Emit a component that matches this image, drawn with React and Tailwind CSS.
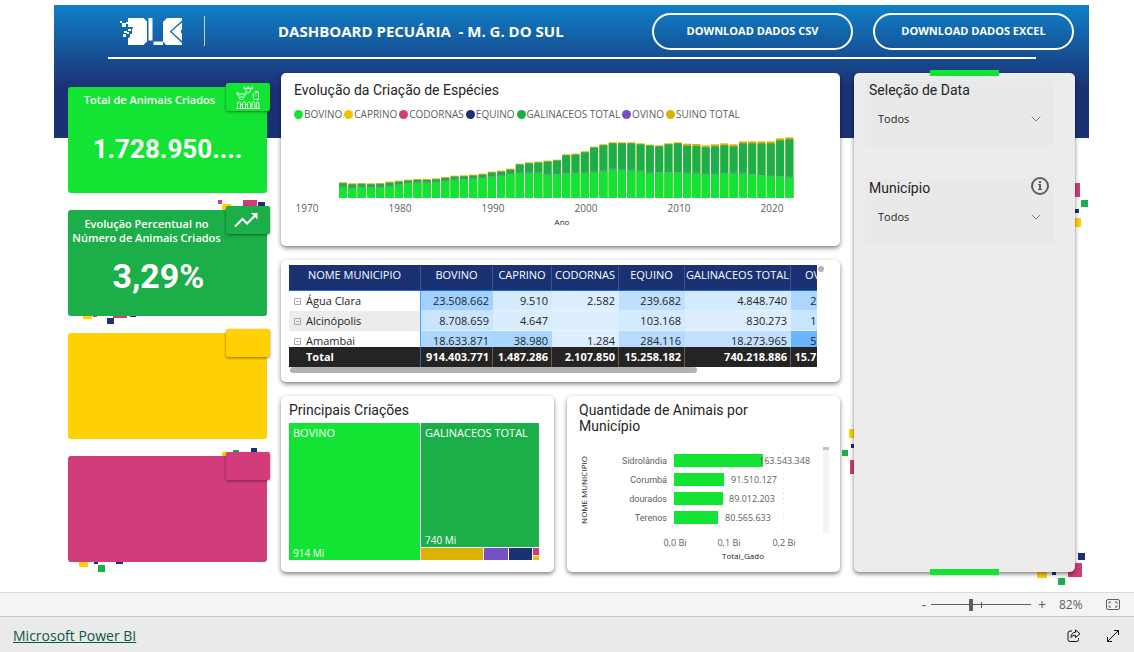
import React, { useState } from "react";
import { ChevronDown } from "lucide-react";

const NAVY = "#1a3174";
const EMERALD = "#1cae48";
const YELLOW = "#ffd003";
const PINK = "#d23c7a";

const species = [
  { name: "BOVINO", color: "bg-[#13e434]" },
  { name: "CAPRINO", color: "bg-[#f2c200]" },
  { name: "CODORNAS", color: "bg-[#d23c7a]" },
  { name: "EQUINO", color: "bg-[#1a3174]" },
  { name: "GALINACEOS TOTAL", color: "bg-[#1cae48]" },
  { name: "OVINO", color: "bg-[#7650c3]" },
  { name: "SUINO TOTAL", color: "bg-[#dcb200]" },
];

// Yearly heights from 1974 to 2022: total herd and cattle share.
const totals = [
  47, 44, 45, 44, 45, 49, 52, 55, 57, 57, 59, 63, 67, 68, 70, 73, 79, 82, 88, 103, 107, 109, 112,
  115, 131, 133, 140, 154, 161, 167, 167, 167, 164, 160, 158, 164, 167, 163, 162, 158, 161, 164,
  161, 170, 170, 170, 170, 179, 182,
];
const cattle = [
  31, 28, 30, 30, 30, 33, 38, 43, 44, 44, 46, 49, 53, 54, 56, 59, 62, 65, 70, 73, 74, 74, 70, 69,
  72, 73, 74, 76, 79, 85, 83, 82, 79, 73, 75, 75, 75, 73, 73, 70, 70, 73, 73, 73, 70, 66, 64, 63,
  61,
];

const columns = [
  "NOME MUNICIPIO",
  "BOVINO",
  "CAPRINO",
  "CODORNAS",
  "EQUINO",
  "GALINACEOS TOTAL",
  "OVINO",
];

const rows = [
  {
    name: "Água Clara",
    head: "bg-white",
    cells: [
      ["23.508.662", "bg-[#a1d1ff]"],
      ["9.510", "bg-[#d4eaff]"],
      ["2.582", "bg-[#dceeff]"],
      ["239.682", "bg-[#bfdfff]"],
      ["4.848.740", "bg-[#d4eaff]"],
      ["273.104", "bg-[#abd6ff]"],
    ],
  },
  {
    name: "Alcinópolis",
    head: "bg-[#ececec]",
    cells: [
      ["8.708.659", "bg-[#c9e4ff]"],
      ["4.647", "bg-[#daedff]"],
      ["", "bg-[#dceeff]"],
      ["103.168", "bg-[#d4eaff]"],
      ["830.273", "bg-[#dceeff]"],
      ["139.870", "bg-[#c9e4ff]"],
    ],
  },
  {
    name: "Amambai",
    head: "bg-white",
    cells: [
      ["18.633.871", "bg-[#aed7ff]"],
      ["38.980", "bg-[#a9d5ff]"],
      ["1.284", "bg-[#dceeff]"],
      ["284.116", "bg-[#b7dbff]"],
      ["18.273.965", "bg-[#c2e0ff]"],
      ["563.218", "bg-[#6bb5ff]"],
    ],
  },
];

const grandTotals = [
  "914.403.771",
  "1.487.286",
  "2.107.850",
  "15.258.182",
  "740.218.886",
  "15.784.302",
];

const cities = [
  { name: "Sidrolândia", value: "163.543.348", width: 89, label: 192 },
  { name: "Corumbá", value: "91.510.127", width: 50, label: 164 },
  { name: "dourados", value: "89.012.203", width: 49, label: 162 },
  { name: "Terenos", value: "80.565.633", width: 44, label: 158 },
];

function Confetti({ pieces }) {
  return (
    <svg className="absolute left-0 top-0 -z-10 size-px overflow-visible" aria-hidden="true">
      {pieces.map(([x, y, w, h, fill], i) => (
        <rect key={i} x={x} y={y} width={w} height={h} fill={fill} />
      ))}
    </svg>
  );
}

function Logo() {
  return (
    <svg viewBox="0 0 64 30" className="h-[30px] w-16 shrink-0" role="img" aria-label="DLB">
      <g fill="#fff">
        <path d="M8 2h15.500l3.500 3.500v20L23.500 29H8v-7l2-1v-3h2v-5l1-1v-1h-5z" />
        <path d="M28.500 2h4v22.500h-4z" />
        <path d="M33.500 25.500h9.500V29h-9.500z" />
        <path d="M47 2h15v2.500L49.700 15.500 62 27v2H46l-3-3.500V6z" />
        <path d="M62 6.500v6.500l-1.500 2.500L62 18v7L51.500 15.500z" />
        <path d="M0 5h2v2H0zM2 7h4v4H2zM6 6h2v2H6zM4 15h3v2H4zM8 13h3v2H8zM3 18h3v3H3zM7 16h2v2H7z" />
      </g>
    </svg>
  );
}

function AnimalsIcon() {
  return (
    <svg viewBox="0 0 24 24" className="size-6" fill="none" stroke="#fff" strokeWidth="0.8" aria-hidden="true">
      <path d="M10 3.500h4.500l-.5 3-1.200 1.500h-1.200L10.500 6.500zM10 3.500L8 4 8.500 1.200M14.500 3.500l2 .5L16 1.200M10.500 3.500c0-2 3.500-2 3.500 0" />
      <path d="M2.500 9h6L8 12.500l-1.200 2H4.200l-1.200-2zM2.500 9L1 10V7l1.500 1M8.500 9L10 10V7L8.500 8M4 12h3M4.500 10.500v.3M6.500 10.500v.3" />
      <path d="M17 13.500l1-3-1.500-.5 2.500-2.500h3.500v7H17.500M19.500 7.500V6.200h2v1.300M19.500 10h1" />
      <path d="M1.500 23.500V18L3 16.500 4.500 18v5.500M6.500 23.500V18L8 16.500 9.500 18v5.500M11.500 23.500V18l1.500-1.500 1.500 1.500v5.500M16 23.500V18l1.500-1.500L19 18v5.500M20.500 23.500V18l1.200-1.500L23 18v5.500M0 23.500h24M4.500 19.500h2M9.500 19.500h2M14.500 19.500H16" />
    </svg>
  );
}

function TrendIcon() {
  return (
    <svg viewBox="0 0 28 20" className="-ml-1 h-5 w-7" fill="none" stroke="#fff" strokeWidth="2" aria-hidden="true">
      <path d="M3 16.500l7.500-7.500 4.500 4.500 9-9" />
      <path d="M19 3h6.500v6.500z" fill="#fff" stroke="none" />
    </svg>
  );
}

function KpiCard({ color, title, value, titleClass = "", valueClass = "", icon, confetti = [] }) {
  return (
    <section className="relative isolate h-[106px]">
      <Confetti pieces={confetti} />
      <div className={`h-full rounded-[3px] ${color}`}>
        {title && (
          <h2 className={`text-center text-[11px] font-semibold leading-[14px] text-white ${titleClass}`}>
            {title}
          </h2>
        )}
        {value && (
          <p className={`text-center font-['Roboto',sans-serif] font-bold text-white ${valueClass}`}>
            {value}
          </p>
        )}
      </div>
      <div
        className={`absolute -right-[3px] -top-1 flex h-7 w-11 items-center justify-center rounded-[2px] shadow-[0_1px_3px_rgba(0,0,0,0.45)] ${color}`}
      >
        {icon}
      </div>
    </section>
  );
}

function Card({ className = "", children }) {
  return (
    <section
      className={`min-w-0 overflow-hidden rounded-[5px] bg-white shadow-[0_2px_4px_rgba(0,0,0,0.5)] ${className}`}
    >
      {children}
    </section>
  );
}

function Heading({ children, className = "" }) {
  return (
    <h2 className={`font-['Roboto',sans-serif] text-sm leading-4 text-[#252423] ${className}`}>
      {children}
    </h2>
  );
}

function EvolutionChart() {
  const base = 75;
  return (
    <svg viewBox="0 0 559 110" className="w-full" role="img" aria-label="Evolução por ano">
      {totals.map((t, i) => {
        const x = 58 + i * 9.3;
        const total = t / 3;
        const beef = cattle[i] / 3;
        const pig = i < 37 ? 1 : 2;
        return (
          <g key={i}>
            <rect x={x} y={base - total} width="8" height={total} fill="#dcb200" />
            <rect x={x} y={base - total + pig} width="8" height={total - pig} fill="#1cae48" />
            <rect x={x} y={base - beef - 1} width="8" height="1" fill="#5fb08a" />
            <rect x={x} y={base - beef} width="8" height={beef} fill="#13e434" />
          </g>
        );
      })}
      <g fill="#605e5c" fontSize="10" textAnchor="middle">
        {[1970, 1980, 1990, 2000, 2010, 2020].map((year, i) => (
          <text key={year} x={26 + i * 93} y="89">
            {year}
          </text>
        ))}
      </g>
      <text x="281" y="102" fill="#252423" fontSize="8" textAnchor="middle">
        Ano
      </text>
    </svg>
  );
}

function HerdTable() {
  return (
    <div className="pl-2 pr-4 pt-[5px]">
      <div className="flex">
        <div className="h-[102px] min-w-0 flex-1 overflow-hidden">
          <table className="w-[566px] table-fixed border-separate border-spacing-0 text-[11px] leading-4 text-[#252423]">
            <colgroup>
              <col className="w-[132px]" />
              <col className="w-[72px]" />
              <col className="w-[59px]" />
              <col className="w-[67px]" />
              <col className="w-[66px]" />
              <col className="w-[106px]" />
              <col className="w-[64px]" />
            </colgroup>
            <thead>
              <tr className="bg-[#1a3174] text-white">
                {columns.map((c) => (
                  <th
                    key={c}
                    scope="col"
                    className="h-[26px] whitespace-nowrap border-b border-r border-b-[#1c6dd0] border-r-[#41558c] p-0 pb-[6px] text-center font-normal"
                  >
                    {c}
                  </th>
                ))}
              </tr>
            </thead>
            <tbody>
              {rows.map((r) => (
                <tr key={r.name}>
                  <th
                    scope="row"
                    className={`h-5 border-r border-r-[#4ba3f5] p-0 pl-[5px] text-left font-normal ${r.head}`}
                  >
                    <span className="flex items-center gap-[5px]">
                      <svg viewBox="0 0 7 7" className="size-[7px]" aria-hidden="true">
                        <path d="M.5.5h6v6h-6zM2 3.500h3" fill="none" stroke="#a9a9a9" />
                      </svg>
                      {r.name}
                    </span>
                  </th>
                  {r.cells.map(([value, shade], i) => (
                    <td
                      key={i}
                      className={`h-5 border-b border-white/40 p-0 pr-1 text-right ${shade}`}
                    >
                      {value}
                    </td>
                  ))}
                </tr>
              ))}
            </tbody>
            <tfoot className="sticky bottom-0">
              <tr className="bg-[#252423] font-bold text-white">
                <th scope="row" className="h-5 border-r border-[#1c6dd0] p-0 pl-[17px] text-left">
                  Total
                </th>
                {grandTotals.map((t) => (
                  <td key={t} className="h-5 border-r border-[#605e5c] p-0 pr-[3px] text-right">
                    {t}
                  </td>
                ))}
              </tr>
            </tfoot>
          </table>
        </div>
        <div className="ml-px mt-px size-[6px] rounded-full bg-[#b3b3b3]" />
      </div>
      <div className="ml-px h-[6px] w-[76%] rounded-full bg-[#b3b3b3]" />
    </div>
  );
}

function Treemap() {
  return (
    <div className="mx-2 mt-[5px] flex h-[137px] gap-px pr-[7px] text-[10px] leading-3 text-white">
      <div className="flex w-[131px] flex-col justify-between bg-[#13e434] px-1 pb-px pt-[3px]">
        <span className="text-[11px] leading-[14px]">BOVINO</span>
        <span>914 Mi</span>
      </div>
      <div className="flex min-w-0 flex-1 flex-col gap-px">
        <div className="flex flex-1 flex-col justify-between bg-[#1cae48] pb-px pl-1 pt-[3px]">
          <span className="whitespace-nowrap text-[11px] leading-[14px]">GALINACEOS TOTAL</span>
          <span>740 Mi</span>
        </div>
        <div className="flex h-3 gap-px">
          <div className="w-[62px] bg-[#dcb200]" />
          <div className="w-6 bg-[#7650c3]" />
          <div className="w-[23px] bg-[#1a3174]" />
          <div className="flex flex-1 flex-col gap-px">
            <div className="flex-1 bg-[#d23c7a]" />
            <div className="h-1 bg-[#f2c200]" />
          </div>
        </div>
      </div>
    </div>
  );
}

function CityChart() {
  return (
    <svg viewBox="0 0 273 126" className="w-full" role="img" aria-label="Animais por município">
      <g stroke="#dedede" strokeDasharray="1 4">
        <path d="M107.500 4v85M162.500 4v85M216.500 4v85" />
      </g>
      {cities.map((c, i) => (
        <g key={c.name} fill="#605e5c" fontSize="9">
          <rect x="107" y={10 + i * 19} width={c.width} height="13" fill="#13e434" />
          <text x="100" y={20 + i * 19} textAnchor="end" className="font-['Roboto',sans-serif]">
            {c.name}
          </text>
          <text x={c.label} y={20 + i * 19}>
            {c.value}
          </text>
        </g>
      ))}
      <g fill="#605e5c" fontSize="9" textAnchor="middle">
        <text x="108" y="102">0,0 Bi</text>
        <text x="162" y="102">0,1 Bi</text>
        <text x="217" y="102">0,2 Bi</text>
      </g>
      <g fill="#252423" fontSize="8" textAnchor="middle">
        <text x="176" y="115">Total_Gado</text>
        <text transform="translate(20 46) rotate(-90)">NOME MUNICIPIO</text>
      </g>
      <rect x="256" y="4" width="6" height="85" fill="#f3f3f3" />
      <rect x="256" y="3" width="6" height="3" fill="#c4c4c4" />
    </svg>
  );
}

function Slicer({ id, label, info }) {
  return (
    <div className="h-[65px] bg-[#e9e9e9] pl-1 pr-[10px]">
      <div className="flex h-[18px] items-center justify-between">
        <label htmlFor={id} className="font-['Roboto',sans-serif] text-sm leading-4 text-[#252423]">
          {label}
        </label>
        {info && (
          <svg viewBox="0 0 20 20" className="-mr-[6px] -mt-1 size-5" aria-hidden="true">
            <circle cx="10" cy="10" r="8" fill="none" stroke="#605e5c" strokeWidth="2" />
            <path d="M9 5h2v2H9zM8 8h3v5h1v1H8v-1h1V9H8z" fill="#605e5c" />
          </svg>
        )}
      </div>
      <div className="mt-[10px] flex items-center">
        <select
          id={id}
          className="w-full appearance-none bg-transparent pl-[9px] text-[11px] leading-5 text-[#252423] outline-none"
        >
          <option>Todos</option>
        </select>
        <ChevronDown className="pointer-events-none -ml-4 size-4 shrink-0 text-[#605e5c]" strokeWidth={1.2} aria-hidden="true" />
      </div>
    </div>
  );
}

export default function App() {
  const [zoom, setZoom] = useState(40);
  return (
    <div className="flex min-h-screen flex-col bg-white font-['Open_Sans','Noto_Sans',sans-serif]">
      <main className="flex-1 pb-5 pl-[54px] pr-[45px] pt-[5px]">
        <div className="bg-[linear-gradient(#0f80c8_0px,#174a8d_56px,#1a3174_84px)] bg-[length:100%_133px] bg-no-repeat">
          <header className="h-[68px] pl-[54px] pr-[15px]">
            <div className="flex h-[52px] items-center">
              <div className="flex w-[97px] items-center justify-between pl-3">
                <Logo />
                <span className="h-[30px] w-px bg-white/70" />
              </div>
              <h1 className="ml-[73px] flex-1 whitespace-pre text-[15px] font-bold leading-5 text-white">
                DASHBOARD PECUÁRIA  - M. G. DO SUL
              </h1>
              <div className="flex gap-5">
                <button className="h-[37px] w-[201px] rounded-full border-2 border-white text-[11px] font-bold text-white">
                  DOWNLOAD DADOS CSV
                </button>
                <button className="h-[37px] w-[201px] rounded-full border-2 border-white text-[11px] font-bold text-white">
                  DOWNLOAD DADOS EXCEL
                </button>
              </div>
            </div>
            <div className="mr-[38px] h-[2px] bg-white" />
          </header>

          <div className="grid grid-cols-[199px_minmax(0,1fr)_221px] gap-[14px] px-[14px]">
            <div className="flex flex-col gap-[17px] pt-[14px]">
              <KpiCard
                color="bg-[#13e434]"
                title="Total de Animais Criados"
                titleClass="pr-9 pt-[6px]"
                value="1.728.950...."
                valueClass="pt-[22px] text-[26px] leading-10"
                icon={<AnimalsIcon />}
              />
              <KpiCard
                color="bg-[#1cae48]"
                title={
                  <>
                    Evolução Percentual no
                    <br />
                    Número de Animais Criados
                  </>
                }
                titleClass="pr-[42px] pt-[7px]"
                value="3,29%"
                valueClass="pr-[18px] pt-[11px] text-[34px] leading-10"
                icon={<TrendIcon />}
                confetti={[
                  [150, -10, 4, 4, PINK],
                  [154, -6, 9, 8, YELLOW],
                  [175, -10, 14, 8, PINK],
                  [190, -8, 7, 6, NAVY],
                  [15, 104, 9, 5, YELLOW],
                  [25, 104, 4, 3, PINK],
                  [45, 104, 14, 4, PINK],
                  [62, 104, 6, 3, NAVY],
                  [39, 108, 7, 6, NAVY],
                ]}
              />
              <KpiCard color="bg-[#ffd003]" />
              <KpiCard
                color="bg-[#d23c7a]"
                confetti={[
                  [154, -4, 9, 8, YELLOW],
                  [165, -6, 6, 6, EMERALD],
                  [183, -8, 6, 6, NAVY],
                  [11, 104, 9, 7, YELLOW],
                  [26, 104, 4, 4, NAVY],
                  [30, 109, 7, 7, EMERALD],
                  [48, 104, 7, 4, NAVY],
                ]}
              />
            </div>

            <div className="flex min-w-0 flex-col gap-[14px]">
              <Card className="h-[173px]">
                <Heading className="pl-[13px] pt-[9px]">Evolução da Criação de Espécies</Heading>
                <ul className="flex gap-[2px] pl-[13px] pt-[9px] text-[10px] leading-[14px] text-[#605e5c]">
                  {species.map((s) => (
                    <li key={s.name} className="flex items-center gap-px whitespace-nowrap">
                      <span className={`size-[9px] rounded-full ${s.color}`} />
                      {s.name}
                    </li>
                  ))}
                </ul>
                <div className="pt-[2px]">
                  <EvolutionChart />
                </div>
              </Card>
              <Card className="h-[122px]">
                <HerdTable />
              </Card>
              <div className="grid grid-cols-2 gap-[13px]">
                <Card className="h-[176px]">
                  <Heading className="pl-2 pt-[6px]">Principais Criações</Heading>
                  <Treemap />
                </Card>
                <Card className="h-[176px]">
                  <Heading className="w-[200px] pl-3 pt-[6px]">
                    Quantidade de Animais por Município
                  </Heading>
                  <div className="pt-[10px]">
                    <CityChart />
                  </div>
                </Card>
              </div>
            </div>

            <aside className="relative isolate">
              <Confetti
                pieces={[
                  [219, 110, 7, 14, PINK],
                  [227, 127, 7, 7, EMERALD],
                  [219, 136, 6, 4, NAVY],
                  [219, 145, 8, 9, YELLOW],
                  [-5, 356, 9, 9, YELLOW],
                  [-3, 371, 4, 4, NAVY],
                  [-12, 377, 6, 6, EMERALD],
                  [-4, 387, 9, 14, PINK],
                  [183, 496, 10, 9, YELLOW],
                  [198, 498, 4, 4, NAVY],
                  [204, 505, 7, 7, EMERALD],
                  [214, 490, 14, 14, PINK],
                  [224, 480, 7, 7, NAVY],
                ]}
              />
              <div className="flex h-full flex-col gap-[33px] rounded-[5px] bg-[#ececec] pl-[11px] pr-[21px] pt-2 shadow-[0_2px_4px_rgba(0,0,0,0.5)]">
                <Slicer id="data" label="Seleção de Data" />
                <Slicer id="municipio" label="Município" info />
              </div>
              <div className="absolute -top-[3px] left-[76px] h-[6px] w-[69px] bg-[#13e434]" />
              <div className="absolute -bottom-[3px] left-[76px] h-[6px] w-[69px] bg-[#13e434]" />
            </aside>
          </div>
        </div>
      </main>

      <div className="flex h-6 items-center justify-end border-t border-[#dcdcdc] bg-[#f4f4f4] pr-[14px] text-xs text-[#605e5c]">
        <button aria-label="Reduzir" className="w-3 text-sm leading-4" onClick={() => setZoom(Math.max(0, zoom - 10))}>
          -
        </button>
        <div className="relative mx-px flex h-4 w-[100px] items-center">
          <span className="absolute left-[50px] top-[5px] h-[6px] w-px bg-[#605e5c]" />
          <input
            type="range"
            aria-label="Zoom"
            min="0"
            max="100"
            value={zoom}
            onChange={(e) => setZoom(Number(e.target.value))}
            className="h-4 w-full appearance-none bg-[linear-gradient(#605e5c,#605e5c)] bg-[length:100%_1px] bg-center bg-no-repeat [&::-webkit-slider-thumb]:h-3 [&::-webkit-slider-thumb]:w-1 [&::-webkit-slider-thumb]:appearance-none [&::-webkit-slider-thumb]:bg-[#605e5c]"
          />
        </div>
        <button aria-label="Ampliar" className="ml-1 w-3 text-sm leading-4" onClick={() => setZoom(Math.min(100, zoom + 10))}>
          +
        </button>
        <span className="ml-[11px] w-[25px]">82%</span>
        <button aria-label="Ajustar à página" className="ml-[22px]">
          <svg viewBox="0 0 14 11" className="h-[11px] w-[14px]" fill="none" stroke="#605e5c">
            <rect x=".5" y=".5" width="13" height="10" rx="1.500" />
            <path d="M5 3H3v1.500M9 3h2v1.500M5 8H3V6.500M9 8h2V6.500" />
          </svg>
        </button>
      </div>

      <footer className="flex h-9 items-center justify-between border-t border-[#c4c4c4] bg-[#eaeaea] pl-[13px] pr-[14px] pt-[3px]">
        <a href="#" className="text-sm leading-5 text-[#0b5748] underline">
          Microsoft Power BI
        </a>
        <div className="flex gap-[25px]">
          <button aria-label="Compartilhar">
            <svg viewBox="0 0 14 14" className="size-[14px]" fill="none" stroke="#111" strokeLinejoin="round">
              <path d="M5 2H3a2 2 0 0 0-2 2v6.500a2 2 0 0 0 2 2h6.500a2 2 0 0 0 2-2V9" />
              <path d="M8.500 1L13 4.800 8.500 8.500V6.300C6.500 6.300 5 7 4 8.500 4 5.500 5.500 3.300 8.500 3.200z" />
            </svg>
          </button>
          <button aria-label="Tela cheia">
            <svg viewBox="0 0 14 14" className="size-[14px]" fill="none" stroke="#111">
              <path d="M1.500 12.500l11-11M8 1.500h4.500V6M6 12.500H1.500V8" />
            </svg>
          </button>
        </div>
      </footer>
    </div>
  );
}
